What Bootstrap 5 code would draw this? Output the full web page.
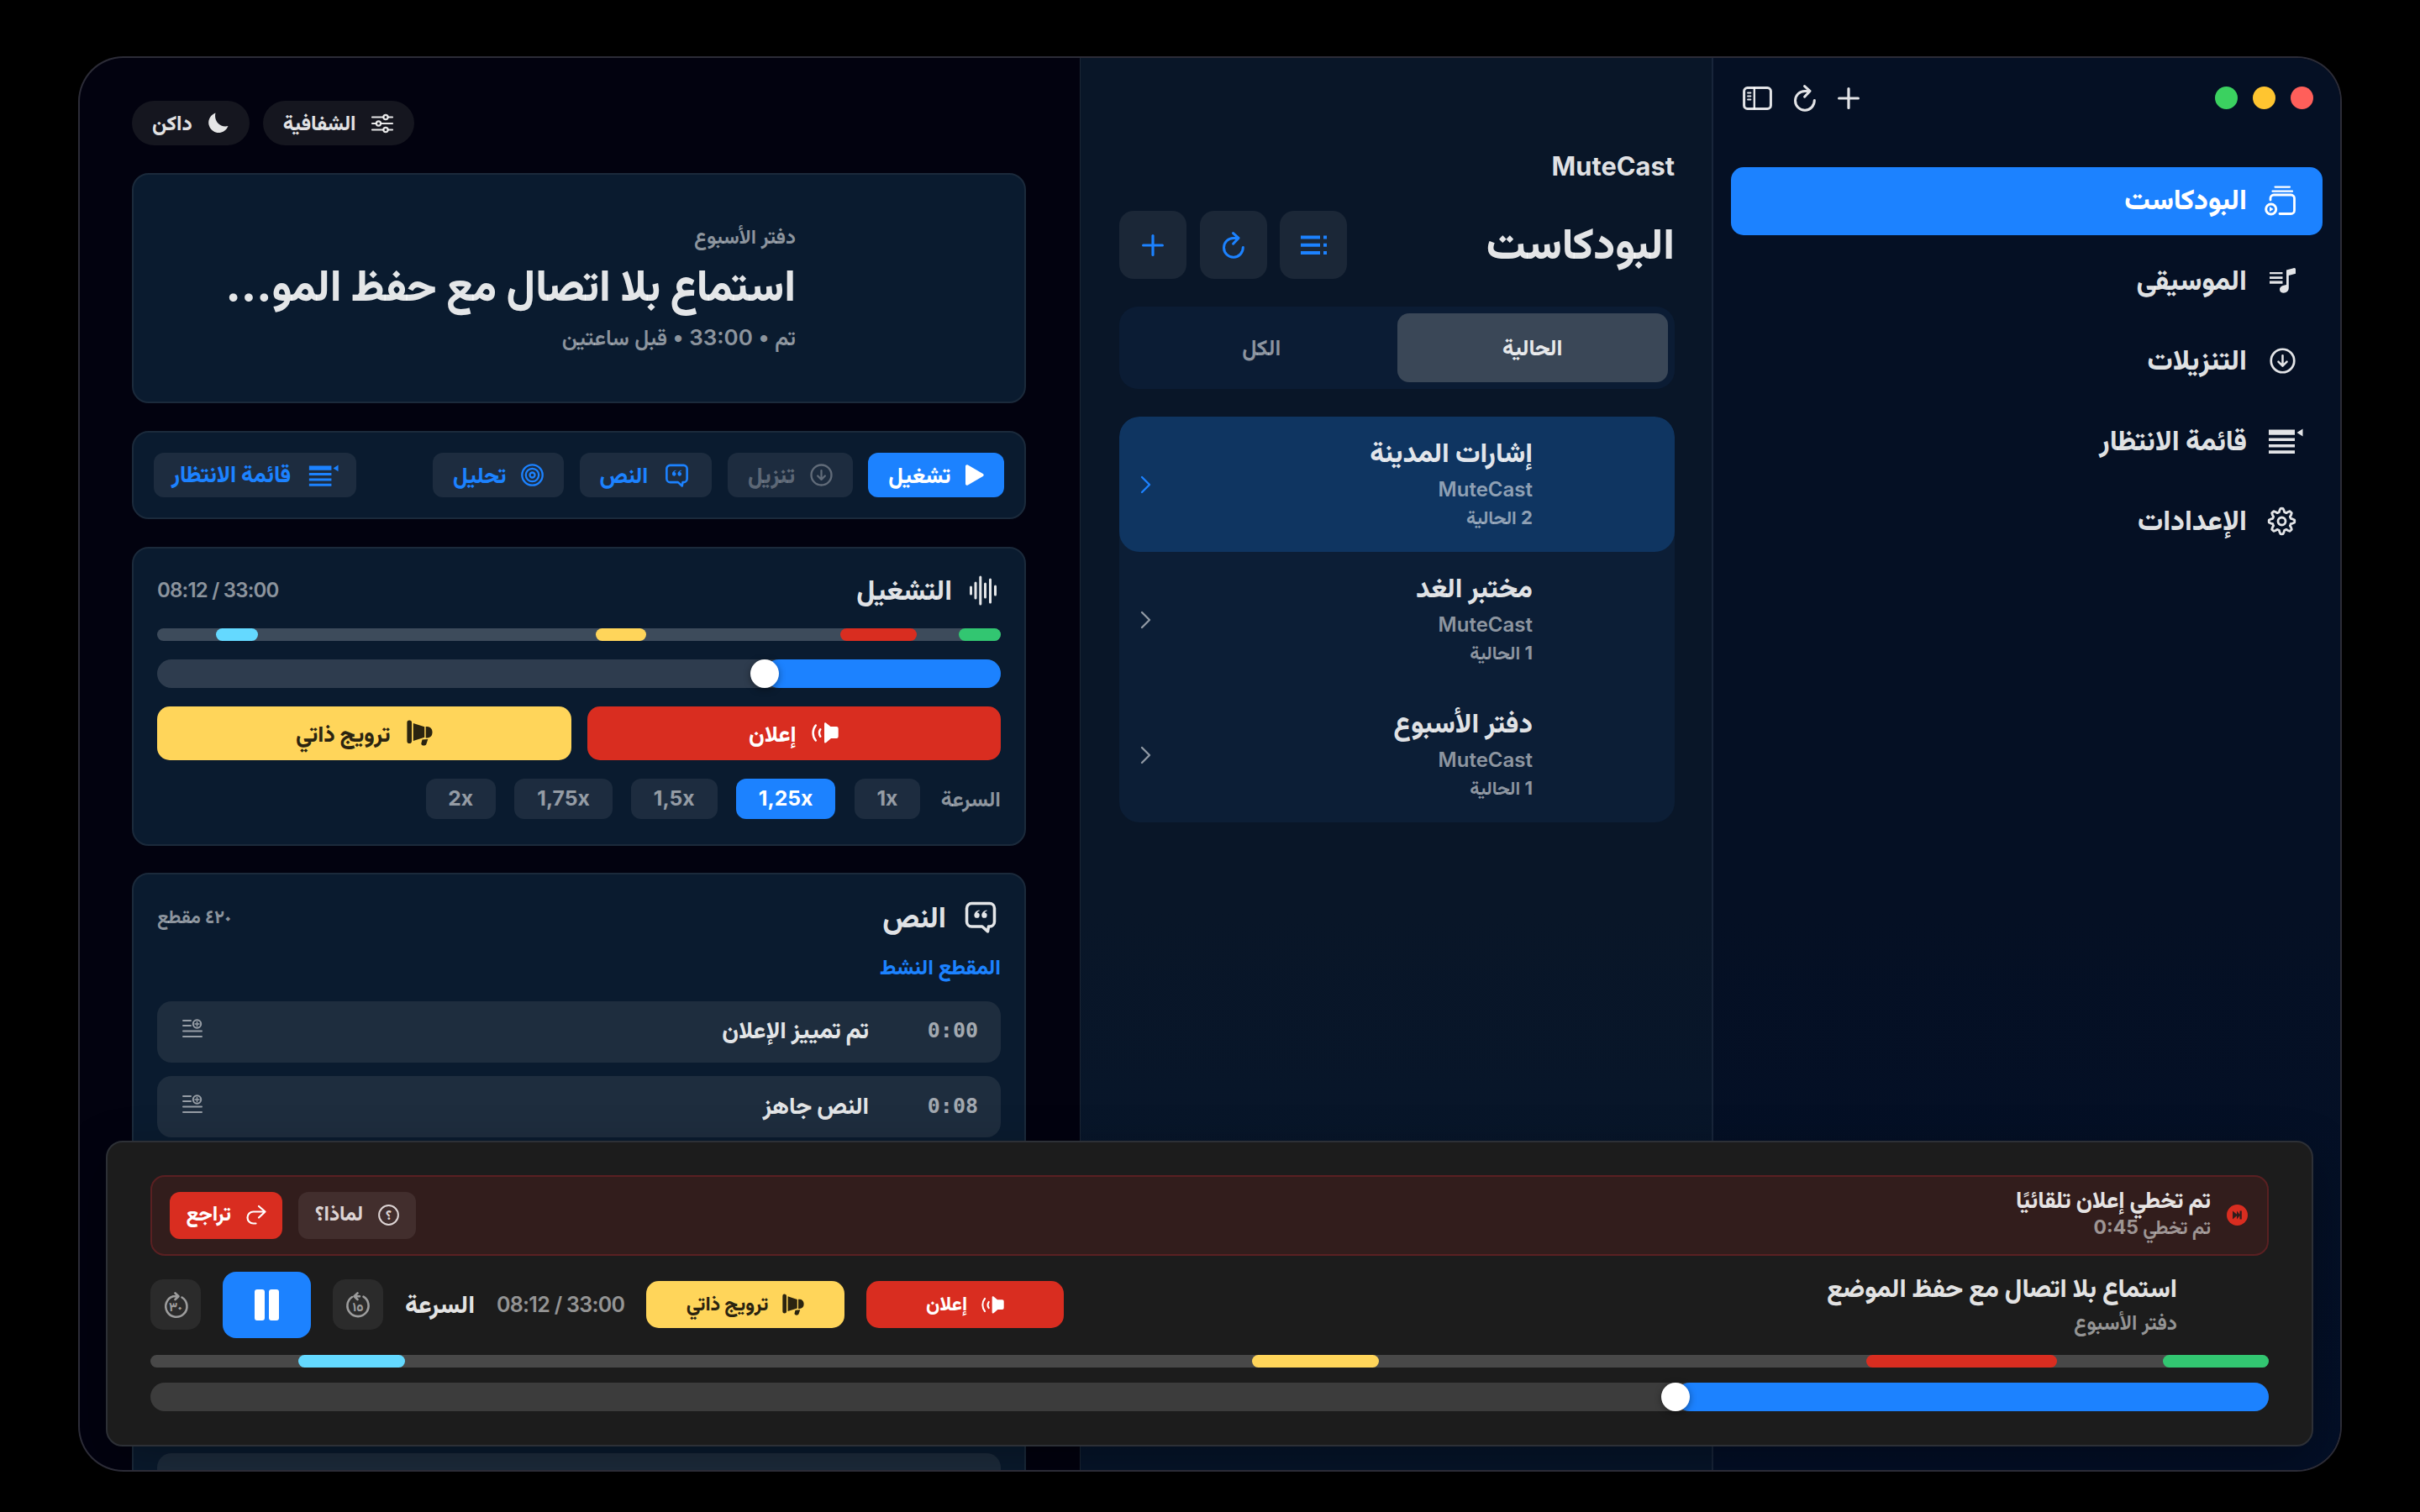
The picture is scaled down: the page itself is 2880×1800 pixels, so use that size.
<!DOCTYPE html>
<html lang="ar" dir="rtl">
<head>
    <meta charset="UTF-8">
    <title>MuteCast</title>
    <meta name="viewport" content="width=device-width, initial-scale=1">

    <!-- Bootstrap CSS -->
    <link href="https://cdn.jsdelivr.net/npm/bootstrap@5.3.0/dist/css/bootstrap.min.css" rel="stylesheet">

    <style>
        :root {
            --accent: #1c82ff;
            --ad: #d92d20;
            --promo: #ffd55a;
            --intro: #32c671;
            --outro: #64d9ff;
            --ink: rgba(255, 255, 255, .89);
            --dim: rgba(255, 255, 255, .54);
            --fill: rgba(255, 255, 255, .08);
        }

        body {
            background-color: #000;
            color: var(--ink);
            font-family: Inter, Vazirmatn, "Noto Sans", sans-serif;
            font-weight: 800;
            font-size: 26px;
            line-height: 1.2;
            height: 1800px;
            overflow: hidden;
        }

        svg { display: block; flex: none; overflow: visible; }
        .stroke { fill: none; stroke: currentColor; stroke-linecap: round; stroke-linejoin: round; }
        .dim { color: var(--dim); font-weight: 700; }
        .accent { color: var(--accent); }
        .bg-ad { background-color: var(--ad); }
        .bg-promo { background-color: var(--promo); }
        .bg-intro { background-color: var(--intro); }
        .bg-outro { background-color: var(--outro); }

        .app-window {
            width: 2694px;
            height: 1685px;
            margin: 67px 93px 0;
            border: 2px solid rgba(255, 255, 255, .17);
            border-radius: 54px;
            background-color: #02020f;
        }

        /* sidebar */
        .side { width: 748px; background: linear-gradient(#051024 60%, #030f27); border-left: 2px solid #18253a; padding: 0 21px; }
        .toolbar { height: 66px; margin-top: 14.5px; padding: 0 11px 0 14px; }
        .lights { gap: 18px; }
        .light { width: 27px; height: 27px; }
        .light.red { background-color: #ff5f5a; }
        .light.yellow { background-color: #ffc530; }
        .light.green { background-color: #3bd160; }
        .tools { gap: 26px; }
        .nav-list { margin-top: 49px; gap: 14.4px; }
        .nav-item-row { height: 81px; border-radius: 15px; padding: 0 32px 3px 27px; gap: 21px; font-size: 33.6px; }
        .nav-item-row.active { background-color: var(--accent); color: #fff; }
        .nav-ico { width: 37px; display: flex; padding-top: 3px; }
        .nav-ico .wide { margin-right: -9px; }

        /* library */
        .library { width: 752px; background: linear-gradient(#091628 60%, #06152b); padding: 111px 44px 0 46px; border-left: 1px solid #1a2534; }
        .brand { font-size: 30.8px; font-weight: 700; height: 71px; }
        .page-title { font-size: 51.7px; margin-bottom: 4px; }
        .sq-btns { gap: 15.5px; }
        .sq-btn { width: 80px; height: 81px; border-radius: 17px; background-color: #1b2737; }
        .segmented { height: 98px; border-radius: 22px; background-color: #0b1c34; padding: 8px; margin-top: 33px; font-size: 26.2px; }
        .segmented .on { background-color: #3a4757; border-radius: 14px; }
        .shows { margin-top: 33px; border-radius: 24px; background-color: #0c1e36; overflow: hidden; }
        .show-row { height: 161px; padding: 0 169px 0 25px; border-radius: 24px; }
        .show-row.on { background-color: #0f3561; }
        .show-name { font-size: 32.8px; margin-bottom: 11px; }
        .show-feed { font-size: 24px; font-weight: 600; margin-bottom: 5px; }
        .show-count { font-size: 22.1px; margin-bottom: 5px; }

        /* main column */
        .stage { padding: 51px 64px 0 62px; gap: 32.7px; }
        .pills { gap: 16px; }
        .pill { height: 53px; border-radius: 27px; background-color: #15161f; padding: 0 25px 0 24px; font-size: 24.4px; gap: 18px; }
        .panel { background-color: #0a1b2f; border: 2px solid #1b2a3b; border-radius: 20px; padding: 28px; flex-shrink: 0; }
        .hero { height: 274.5px; padding-right: 272px; gap: 14px; }
        .hero .kicker { font-size: 24px; }
        .hero .headline { font-size: 52px; margin: -2px 0 1px; }
        .hero .meta { font-size: 26px; font-weight: 600; }
        .acts { height: 105.5px; padding: 0 24px; gap: 18.7px; }
        .act { height: 52.5px; border-radius: 12px; background-color: var(--fill); padding: 0 24px; gap: 17.5px; font-size: 26.4px; }
        .act.roomy { padding-right: 27px; gap: 20px; }
        .act.queue { padding: 0 21px; gap: 21px; font-size: 27.2px; }
        .act.on { background-color: var(--accent); color: #fff; }
        .act.off { color: rgba(255, 255, 255, .3); }

        .playback { height: 355.5px; gap: 22px; }
        .panel-head { height: 44.5px; }
        .panel-title { font-size: 33.2px; gap: 21px; padding-right: 4px; }
        .panel-title.text { font-size: 34.6px; }
        .marks { height: 15.5px; border-radius: 8px; background-color: rgba(255, 255, 255, .21); position: relative; }
        .marks i { position: absolute; top: 0; bottom: 0; border-radius: 8px; }
        .seek { height: 34px; border-radius: 17px; background-color: rgba(255, 255, 255, .15); }
        .seek div { height: 34px; border-radius: 17px; background-color: var(--accent); }
        .seek span { width: 34px; height: 34px; margin-left: -17px; background-color: #fff; box-shadow: 0 2px 8px rgba(0, 0, 0, .4); }
        .tags { height: 63.5px; gap: 19px; }
        .tag { border-radius: 15px; font-size: 26.7px; gap: 19px; }
        .tag.bg-ad { color: #fff; }
        .tag.bg-promo { color: #2b2410; }
        .rates { gap: 22.5px; font-size: 25.6px; }
        .rates > .dim { margin-left: 2px; }
        .rate { height: 48.7px; border-radius: 12px; background-color: var(--fill); color: var(--dim); padding: 0 26.8px; font-size: 24.7px; font-weight: 700; }
        .rate.on { background-color: var(--accent); color: #fff; }
        .clock { font-size: 24px; font-weight: 600; letter-spacing: -.8px; }
        .count { font-size: 22.3px; }
        .active-part { font-size: 25.4px; height: 34px; margin: 22px 0; }
        .lines { gap: 16.7px; font-size: 28.2px; }
        .line { height: 73px; border-radius: 17px; background-color: #1e2d3e; padding: 0 27px 3px 30px; }
        .line time { width: 130px; font: 700 25px "DejaVu Sans Mono", monospace; color: rgba(255, 255, 255, .6); }
        .line svg { margin-bottom: 5px; }

        /* player */
        .player { left: 31px; right: 32px; bottom: 28px; height: 364px; background-color: #1c1c1c; border: 2px solid #2d3036; border-radius: 20px; padding: 39px 51px 0; box-shadow: 0 20px 60px rgba(0, 0, 0, .3); }
        .notice { height: 95.5px; border-radius: 17px; border: 2px solid #5a2022; background-color: #321d1c; padding: 0 23px 0 21px; }
        .notice-text { padding-right: 19px; }
        .notice-title { font-size: 27.4px; margin: -6px 0 4px; }
        .notice-sub { font-size: 22.9px; }
        .notice-btns { gap: 19px; }
        .notice-btn { height: 56px; border-radius: 12px; padding: 0 19.5px 4px; gap: 18px; font-size: 24.2px; color: #fff; }
        .notice-btn svg { margin-top: 4px; }
        .notice-btn.why { background-color: rgba(255, 255, 255, .08); color: #ddd4d4; }
        .controls { margin-top: 19px; height: 79px; gap: 26px; }
        .now { padding: 0 109px 3px 0; }
        .now-title { font-size: 31px; margin-bottom: 9px; }
        .now-show { font-size: 24.4px; }
        .round-btn { width: 60px; height: 60px; border-radius: 15px; background-color: #2b2b2b; color: #9c9c9c; }
        .big-btn { width: 105px; height: 79px; border-radius: 16px; background-color: var(--accent); color: #fff; }
        .player .speed { font-size: 29.6px; }
        .player .clock { font-size: 25px; letter-spacing: -.7px; }
        .player .marks { background-color: #484848; margin-top: 20px; }
        .player .seek { background-color: #3c3c3c; margin-top: 18px; }
        .player .tag { width: 235.5px; height: 56px; font-size: 23.2px; gap: 17px; }
    </style>
</head>
<body>

    <!-- shared icons -->
    <svg width="0" height="0" class="position-absolute">
        <symbol id="i-reload" viewBox="0 0 26 32"><path class="stroke" stroke-width="3" d="M24.3 18.4A11.4 11.4 0 1 1 13 7.4h5.5M12.6 1.6l6.4 5.8-6.4 6.8"/></symbol>
        <symbol id="i-plus" viewBox="0 0 26 26"><path class="stroke" stroke-width="3.2" d="M13 1.6v22.8M1.6 13h22.8"/></symbol>
        <symbol id="i-down" viewBox="0 0 32 32"><g class="stroke"><circle cx="16" cy="16" r="14.2" stroke-width="2.8"/><path stroke-width="2.6" d="M16 9.5V22M10.800 17.200 16 22.400l5.200-5.200"/></g></symbol>
        <symbol id="i-queue" viewBox="0 0 42 30"><path fill="currentColor" d="M1 1.500h31v6.200H1zM1 11.500h31v3.600H1zM1 19h31v3.600H1zM1 26.300h31v3.600H1zM34.500 5l7-4.500v9z"/></symbol>
        <symbol id="i-quote" viewBox="0 0 30 30"><path class="stroke" stroke-width="2.8" d="M6.500 2h17A4.500 4.500 0 0 1 28 6.500v12.700a4.500 4.500 0 0 1-4.500 4.500h-1l-.8 4.600-5.200-4.600h-10A4.500 4.500 0 0 1 2 19.200V6.500A4.500 4.500 0 0 1 6.500 2z"/><path fill="currentColor" d="M14 8.200c-3.400.5-5 2.600-5 5a2.500 2.500 0 1 0 2.800-2.500c.2-.8.9-1.400 2.200-1.700zM21 8.200c-3.400.5-5 2.600-5 5a2.500 2.500 0 1 0 2.800-2.500c.2-.8.9-1.400 2.200-1.700z"/></symbol>
        <symbol id="i-horn" viewBox="0 0 31 31"><path fill="currentColor" d="M3.300.5A2.800 2.800 0 0 1 6 3.300v22a2.800 2.800 0 0 1-5.600 0v-22A2.800 2.800 0 0 1 3.300.5zM7.800 4l13.400 4.200v12.600L7.800 25zM22.700 8h1.800a6 6 0 0 1 6 6v1.500a6 6 0 0 1-6 6h-1.800zM18.500 23.500l6.800-.4-2 5.800c-.9 2.400-6.300 2.400-6-1z"/></symbol>
        <symbol id="i-speaker" viewBox="0 0 32 25"><path fill="currentColor" d="M15 1.500C15 .3 16.300-.2 17.200.7L22.500 5h7a2.200 2.200 0 0 1 2.200 2.200v9.600a2.200 2.200 0 0 1-2.200 2.200H23l-5.800 5c-.9.9-2.200.4-2.200-.8z"/><path class="stroke" stroke-width="2.5" d="M10.300 8.300c-1.700 2.600-1.700 5.800 0 8.400M4.800 3.500c-4.300 5.200-4.300 12.800 0 18"/></symbol>
        <symbol id="i-note" viewBox="0 0 24 22"><g class="stroke" stroke-width="2"><path d="M1 2h9M1 8h9M1 14.500h22M1 21h22"/><circle cx="17.500" cy="6" r="4.700"/><path d="M17.500 3.500v5M15 6h5" stroke-width="1.500"/></g></symbol>
        <symbol id="i-chev" viewBox="0 0 13 22"><path class="stroke" stroke-width="2.4" d="m2 2 9 9-9 9"/></symbol>
    </svg>

    <div class="app-window position-relative overflow-hidden d-flex">

        <aside class="side flex-shrink-0">
            <div class="toolbar d-flex align-items-center">
                <div class="lights d-flex">
                    <span class="light red rounded-circle"></span>
                    <span class="light yellow rounded-circle"></span>
                    <span class="light green rounded-circle"></span>
                </div>
                <div class="tools d-flex align-items-center me-auto">
                    <svg width="26" height="26"><use href="#i-plus"/></svg>
                    <svg width="26" height="32"><use href="#i-reload"/></svg>
                    <svg width="35" height="28" viewBox="0 0 35 28"><g class="stroke"><rect x="1.6" y="1.6" width="31.8" height="24.8" rx="4" stroke-width="3"/><path stroke-width="2.400" d="M13.800 2v24"/><path stroke-width="1.800" d="M6 7.500h3.500M6 11.500h3.500M6 15.500h3.500"/></g></svg>
                </div>
            </div>
            <nav class="nav-list d-flex flex-column">
                <div class="nav-item-row active d-flex align-items-center">
                    <span class="nav-ico"><svg width="37" height="36" viewBox="0 0 37 36"><g class="stroke" stroke-width="2.8"><path d="M7 17v-2a4 4 0 0 1 4-4h20.500a4 4 0 0 1 4 4v14.500a4 4 0 0 1-4 4H18"/><path d="M9.500 6.700H33M12.500 1.600H30" stroke-width="2.200"/><circle cx="7.700" cy="28" r="6" stroke-width="3"/></g><path fill="currentColor" d="m6 25 4.600 3L6 31z"/></svg></span>
                    <span>البودكاست</span>
                </div>
                <div class="nav-item-row d-flex align-items-center">
                    <span class="nav-ico"><svg width="31" height="30" viewBox="0 0 31 30"><path fill="currentColor" d="M0 5h15.500v2.200H0zM0 10.300h15.500v2.600H0zM0 15.500h15.500v3.200H0zM20 2.500 28.500.2C30.200-.2 31 .5 31 2v4.800L22.800 9v14.500c0 4-2.800 6.200-6 6.200-2.600 0-4.800-1.500-4.800-4 0-3 2.500-4.500 5-4.900L20 20z"/></svg></span>
                    <span>الموسيقى</span>
                </div>
                <div class="nav-item-row d-flex align-items-center">
                    <span class="nav-ico"><svg width="31" height="31"><use href="#i-down"/></svg></span>
                    <span>التنزيلات</span>
                </div>
                <div class="nav-item-row d-flex align-items-center">
                    <span class="nav-ico"><svg class="wide" width="42" height="30"><use href="#i-queue"/></svg></span>
                    <span>قائمة الانتظار</span>
                </div>
                <div class="nav-item-row d-flex align-items-center">
                    <span class="nav-ico"><svg width="33" height="33" viewBox="0 0 33 33"><g class="stroke" stroke-width="2.800"><circle cx="16.500" cy="16.500" r="4.500"/><path id="gear" d=""/></g></svg></span>
                    <span>الإعدادات</span>
                </div>
            </nav>
        </aside>

        <section class="library flex-shrink-0">
            <div class="brand">MuteCast</div>
            <div class="d-flex align-items-center justify-content-between">
                <div class="page-title">البودكاست</div>
                <div class="sq-btns d-flex accent">
                    <span class="sq-btn d-flex align-items-center justify-content-center"><svg width="31" height="24" viewBox="0 0 31 24"><path fill="currentColor" d="M0 .5h23v4H0zM0 9.700h23v4H0zM0 19h23v4H0zM27 .5h4v4h-4zM27 9.700h4v4h-4zM27 19h4v4h-4z"/></svg></span>
                    <span class="sq-btn d-flex align-items-center justify-content-center"><svg width="26" height="32"><use href="#i-reload"/></svg></span>
                    <span class="sq-btn d-flex align-items-center justify-content-center"><svg width="26" height="26"><use href="#i-plus"/></svg></span>
                </div>
            </div>
            <div class="segmented d-flex">
                <div class="on w-50 d-flex align-items-center justify-content-center">الحالية</div>
                <div class="w-50 d-flex align-items-center justify-content-center dim">الكل</div>
            </div>
            <div class="shows">
                <div class="show-row on d-flex align-items-center justify-content-between">
                    <div>
                        <div class="show-name">إشارات المدينة</div>
                        <div class="show-feed dim">MuteCast</div>
                        <div class="show-count dim">2 الحالية</div>
                    </div>
                    <svg class="accent" width="13" height="22"><use href="#i-chev"/></svg>
                </div>
                <div class="show-row d-flex align-items-center justify-content-between">
                    <div>
                        <div class="show-name">مختبر الغد</div>
                        <div class="show-feed dim">MuteCast</div>
                        <div class="show-count dim">1 الحالية</div>
                    </div>
                    <svg class="dim" width="13" height="22"><use href="#i-chev"/></svg>
                </div>
                <div class="show-row d-flex align-items-center justify-content-between">
                    <div>
                        <div class="show-name">دفتر الأسبوع</div>
                        <div class="show-feed dim">MuteCast</div>
                        <div class="show-count dim">1 الحالية</div>
                    </div>
                    <svg class="dim" width="13" height="22"><use href="#i-chev"/></svg>
                </div>
            </div>
        </section>

        <main class="stage flex-grow-1 d-flex flex-column">
            <div class="pills d-flex justify-content-end">
                <span class="pill d-flex align-items-center"><svg width="26" height="22" viewBox="0 0 26 22"><g class="stroke" stroke-width="2.200"><path d="M1 3.500h13M20 3.500h5M1 11h4M12 11h13M1 18.500h13M20 18.500h5"/><circle cx="17" cy="3.500" r="2.600"/><circle cx="8.500" cy="11" r="2.600"/><circle cx="17" cy="18.500" r="2.600"/></g></svg>الشفافية</span>
                <span class="pill d-flex align-items-center"><svg width="25" height="25" viewBox="0 0 25 25"><path fill="currentColor" d="M9.500.5A12 12 0 1 0 24.500 16C15 18.500 7 10 9.500.5z"/></svg>داكن</span>
            </div>

            <div class="panel hero d-flex flex-column justify-content-center">
                <div class="kicker dim">دفتر الأسبوع</div>
                <div class="headline">استماع بلا اتصال مع حفظ المو…</div>
                <div class="meta dim">تم • 33:00 • قبل ساعتين</div>
            </div>

            <div class="panel acts d-flex align-items-center">
                <span class="act on d-flex align-items-center"><svg width="22" height="25" viewBox="0 0 22 25"><path fill="currentColor" d="M0 2C0 .5 1.500-.3 2.800.4l18 10.600c1.300.8 1.300 2.200 0 3L2.800 24.600C1.500 25.300 0 24.500 0 23z"/></svg>تشغيل</span>
                <span class="act off d-flex align-items-center"><svg width="27" height="27"><use href="#i-down"/></svg>تنزيل</span>
                <span class="act roomy accent d-flex align-items-center"><svg width="29" height="28"><use href="#i-quote"/></svg>النص</span>
                <span class="act accent d-flex align-items-center"><svg width="27" height="27" viewBox="0 0 27 27"><g class="stroke" stroke-width="2.300"><circle cx="13.500" cy="13.500" r="12.200"/><circle cx="13.500" cy="13.500" r="7.700"/><circle cx="13.500" cy="13.500" r="3"/></g></svg>تحليل</span>
                <span class="act queue accent d-flex align-items-center me-auto"><svg width="36" height="26"><use href="#i-queue"/></svg>قائمة الانتظار</span>
            </div>

            <div class="panel playback d-flex flex-column">
                <div class="panel-head d-flex align-items-center justify-content-between">
                    <div class="panel-title d-flex align-items-center"><svg width="33" height="36" viewBox="0 0 33 36"><path class="stroke" stroke-width="3" d="M1.500 14v8M7 9v18M12.800 2v32M18.500 10v16M24.500 5v27M30.500 13v10"/></svg>التشغيل</div>
                    <span class="clock dim" dir="ltr">08:12 / 33:00</span>
                </div>
                <div class="marks">
                    <i class="bg-intro" style="right: 0%; width: 5%"></i>
                    <i class="bg-ad" style="right: 10%; width: 9%"></i>
                    <i class="bg-promo" style="right: 42%; width: 6%"></i>
                    <i class="bg-outro" style="right: 88%; width: 5%"></i>
                </div>
                <div class="seek"><div class="d-flex justify-content-end" style="width: 28%"><span class="rounded-circle"></span></div></div>
                <div class="tags d-flex">
                    <span class="tag bg-ad w-50 d-flex align-items-center justify-content-center"><svg width="32" height="25"><use href="#i-speaker"/></svg>إعلان</span>
                    <span class="tag bg-promo w-50 d-flex align-items-center justify-content-center"><svg width="31" height="31"><use href="#i-horn"/></svg>ترويج ذاتي</span>
                </div>
                <div class="rates d-flex align-items-center">
                    <span class="dim">السرعة</span>
                    <span class="rate d-flex align-items-center" dir="ltr">1x</span>
                    <span class="rate on d-flex align-items-center" dir="ltr">1,25x</span>
                    <span class="rate d-flex align-items-center" dir="ltr">1,5x</span>
                    <span class="rate d-flex align-items-center" dir="ltr">1,75x</span>
                    <span class="rate d-flex align-items-center" dir="ltr">2x</span>
                </div>
            </div>

            <div class="panel">
                <div class="panel-head d-flex align-items-center justify-content-between">
                    <div class="panel-title text d-flex align-items-center"><svg width="40" height="38"><use href="#i-quote"/></svg>النص</div>
                    <span class="count dim">٤٢٠ مقطع</span>
                </div>
                <div class="active-part accent">المقطع النشط</div>
                <div class="lines d-flex flex-column">
                    <div class="line d-flex align-items-center"><time>0:00</time><span>تم تمييز الإعلان</span><svg class="dim me-auto" width="24" height="22"><use href="#i-note"/></svg></div>
                    <div class="line d-flex align-items-center"><time>0:08</time><span>النص جاهز</span><svg class="dim me-auto" width="24" height="22"><use href="#i-note"/></svg></div>
                    <div class="line"></div>
                    <div class="line"></div>
                    <div class="line"></div>
                    <div class="line"></div>
                    <div class="line"></div>
                </div>
            </div>
        </main>

        <div class="player position-absolute">
            <div class="notice d-flex align-items-center">
                <svg width="25" height="25" viewBox="0 0 25 25"><circle cx="12.500" cy="12.500" r="12.500" fill="#d92d20"/><path fill="#321d1c" d="m7 7.500 6 5-6 5zM12 7.500l4 5-4 5zM15.500 7.500h2.300v10h-2.300z"/></svg>
                <div class="notice-text flex-grow-1">
                    <div class="notice-title">تم تخطي إعلان تلقائيًا</div>
                    <div class="notice-sub dim">تم تخطي 0:45</div>
                </div>
                <div class="notice-btns d-flex">
                    <span class="notice-btn why d-flex align-items-center"><svg width="25" height="25" viewBox="0 0 25 25"><circle class="stroke" cx="12.500" cy="12.500" r="11.400" stroke-width="2"/><text x="12.500" y="18" font-size="16" text-anchor="middle" fill="currentColor">؟</text></svg>لماذا؟</span>
                    <span class="notice-btn bg-ad d-flex align-items-center"><svg width="24" height="23" viewBox="0 0 24 23"><path class="stroke" stroke-width="2.200" d="M22.500 7.500h-14a7 7 0 0 0 0 14h3M15 1l7.500 6.500L15 14.500"/></svg>تراجع</span>
                </div>
            </div>
            <div class="controls d-flex align-items-center">
                <div class="now flex-grow-1">
                    <div class="now-title">استماع بلا اتصال مع حفظ الموضع</div>
                    <div class="now-show dim">دفتر الأسبوع</div>
                </div>
                <span class="tag bg-ad d-flex align-items-center justify-content-center"><svg width="27" height="21"><use href="#i-speaker"/></svg>إعلان</span>
                <span class="tag bg-promo d-flex align-items-center justify-content-center"><svg width="26" height="26"><use href="#i-horn"/></svg>ترويج ذاتي</span>
                <span class="clock dim" dir="ltr">08:12 / 33:00</span>
                <span class="speed">السرعة</span>
                <span class="round-btn d-flex align-items-center justify-content-center"><svg width="30" height="31" viewBox="0 0 30 31"><path class="stroke" stroke-width="2.600" d="M21.500 5.700A12.600 12.600 0 1 1 8 6M10.500 5.200H17M14.500 1.500l-4 3.700 4 3.800"/><text x="15" y="23" font-size="15" text-anchor="middle" fill="currentColor">١٥</text></svg></span>
                <span class="big-btn d-flex align-items-center justify-content-center"><svg width="29" height="37" viewBox="0 0 29 37"><path fill="currentColor" d="M3 0h6a3 3 0 0 1 3 3v31a3 3 0 0 1-3 3H3a3 3 0 0 1-3-3V3a3 3 0 0 1 3-3zM20 0h6a3 3 0 0 1 3 3v31a3 3 0 0 1-3 3h-6a3 3 0 0 1-3-3V3a3 3 0 0 1 3-3z"/></svg></span>
                <span class="round-btn d-flex align-items-center justify-content-center"><svg width="30" height="31" viewBox="0 0 30 31"><path class="stroke" stroke-width="2.600" d="M22.500 6.500A12.600 12.600 0 1 1 12 5.200h6M14.500 1.500l4 3.700-4 3.800"/><text x="15" y="23" font-size="15" text-anchor="middle" fill="currentColor">٣٠</text></svg></span>
            </div>
            <div class="marks">
                <i class="bg-intro" style="right: 0%; width: 5%"></i>
                <i class="bg-ad" style="right: 10%; width: 9%"></i>
                <i class="bg-promo" style="right: 42%; width: 6%"></i>
                <i class="bg-outro" style="right: 88%; width: 5%"></i>
            </div>
            <div class="seek"><div class="d-flex justify-content-end" style="width: 28%"><span class="rounded-circle"></span></div></div>
        </div>
    </div>

    <script>
        // eight-tooth cog outline
        var d = "";
        for (var i = 0; i < 64; i++) {
            var a = i / 64 * Math.PI * 2;
            var r = 13.2 + 2.1 * Math.tanh(3 * Math.cos(8 * a));
            d += (i ? "L" : "M") + (16.5 + r * Math.sin(a)).toFixed(1) + " " + (16.5 - r * Math.cos(a)).toFixed(1);
        }
        document.getElementById("gear").setAttribute("d", d + "z");
    </script>

    <!-- Bootstrap JS -->
    <script src="https://cdn.jsdelivr.net/npm/bootstrap@5.3.0/dist/js/bootstrap.bundle.min.js"></script>
</body>
</html>
